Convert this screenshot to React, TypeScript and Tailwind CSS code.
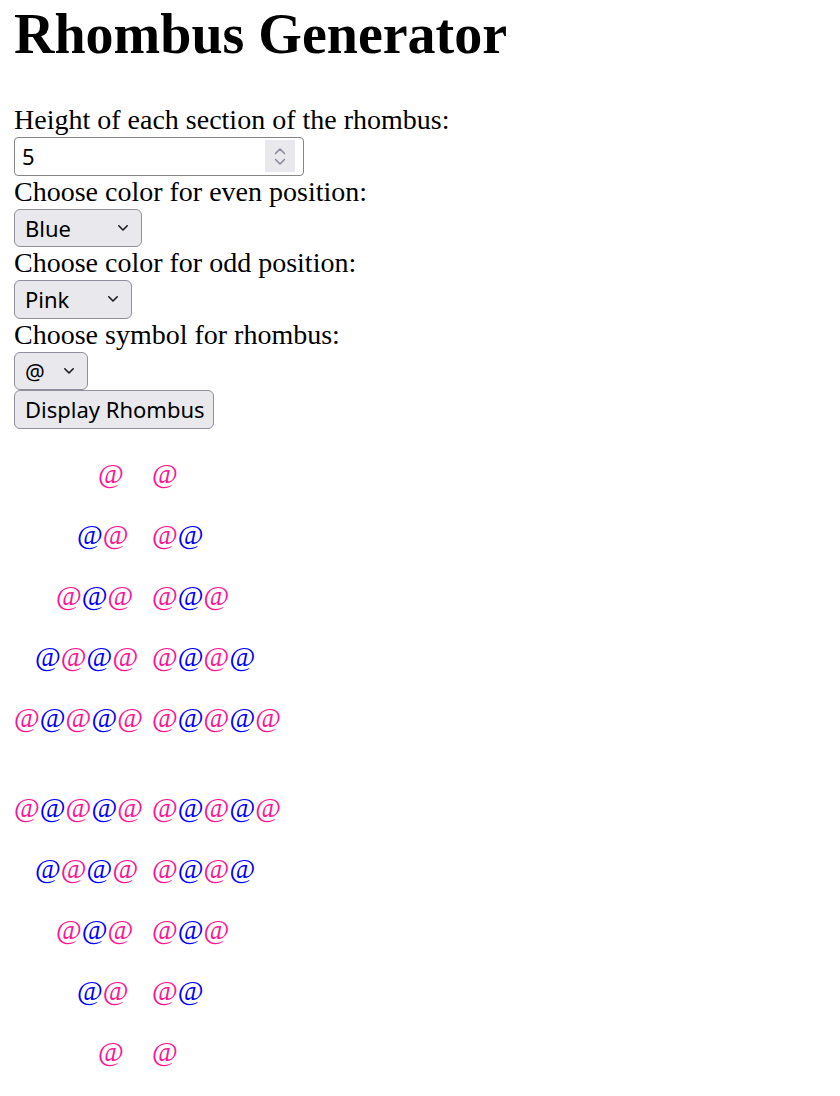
import React from "react";

const PINK = "#ff1493";
const BLUE = "#0000ff";
const SANS = '"Noto Sans", "Open Sans", sans-serif';

function Chevron() {
  return (
    <svg width="12" height="8" viewBox="0 0 12 8">
      <path d="M1.8 1.8 L6 6 L10.2 1.8" fill="none" stroke="#1a1a1a" strokeWidth="1.6" strokeLinecap="round" strokeLinejoin="round" />
    </svg>
  );
}

function FakeSelect({ label, width }: { label: string; width: string }) {
  return (
    <div
      className={`${width} h-[38.5px] flex items-center justify-between pl-[10px] pr-[12px] bg-[#e9e9ed] border border-[#8f8f9d] rounded-[6px] text-[22px] text-black leading-none`}
      style={{ fontFamily: SANS }}
    >
      <span>{label}</span>
      <Chevron />
    </div>
  );
}

function At({ color }: { color: string }) {
  return (
    <span className="inline-block w-[25.8px] text-center" style={{ color }}>
      @
    </span>
  );
}

function Row({ n, total }: { n: number; total: number }) {
  const lead = " ".repeat(3 * (total - n));
  const left: React.ReactNode[] = [];
  for (let k = n; k >= 1; k--) {
    left.push(<At key={"l" + k} color={k % 2 === 1 ? PINK : BLUE} />);
  }
  const right: React.ReactNode[] = [];
  for (let k = 1; k <= n; k++) {
    right.push(<At key={"r" + k} color={k % 2 === 1 ? PINK : BLUE} />);
  }
  return (
    <div className="h-[32px] leading-[32px] whitespace-pre flex">
      <span className="w-[138px] shrink-0">
        {lead}
        {left}
      </span>
      <span>{right}</span>
    </div>
  );
}

function Label({ children }: { children: React.ReactNode }) {
  return <div className="leading-[32px] h-[33px]">{children}</div>;
}

export default function App() {
  const total = 5;
  const top = [1, 2, 3, 4, 5];
  const bottom = [5, 4, 3, 2, 1];
  return (
    <div
      className="min-h-[1096px] bg-white text-black px-[14px] text-[28px]"
      style={{ fontFamily: '"Liberation Serif", "Times New Roman", serif' }}
    >
      <h1 className="text-[56px] font-bold leading-[64px] m-0 pt-[2px] mb-[38px]">Rhombus Generator</h1>
      <div className="flex flex-col items-start">
        <Label>Height of each section of the rhombus:</Label>
        <div className="w-[290px] h-[38.5px] border border-[#858585] rounded-[4px] flex items-center justify-between pl-[7px] pr-[8px]">
          <span className="text-[22px] leading-none" style={{ fontFamily: SANS }}>
            5
          </span>
          <div className="w-[30px] h-[32px] bg-[#e9e9ed] flex flex-col items-center justify-center gap-[3px]">
            <svg width="12" height="8" viewBox="0 0 12 8">
              <path d="M1.5 6.5 L6 2 L10.5 6.5" fill="none" stroke="#8a8a98" strokeWidth="1.6" strokeLinecap="round" strokeLinejoin="round" />
            </svg>
            <svg width="12" height="8" viewBox="0 0 12 8">
              <path d="M1.5 1.5 L6 6 L10.5 1.5" fill="none" stroke="#8a8a98" strokeWidth="1.6" strokeLinecap="round" strokeLinejoin="round" />
            </svg>
          </div>
        </div>
        <Label>Choose color for even position:</Label>
        <FakeSelect label="Blue" width="w-[128px]" />
        <Label>Choose color for odd position:</Label>
        <FakeSelect label="Pink" width="w-[118px]" />
        <Label>Choose symbol for rhombus:</Label>
        <FakeSelect label="@" width="w-[74px]" />
        <div
          className="w-[200px] h-[38.5px] flex items-center pl-[10px] bg-[#e9e9ed] border border-[#8f8f9d] rounded-[6px] text-[22px] leading-none"
          style={{ fontFamily: SANS }}
        >
          Display Rhombus
        </div>
      </div>
      <div className="flex flex-col gap-[29px] mt-[29px]">
        {top.map((n) => (
          <Row key={"t" + n} n={n} total={total} />
        ))}
        <div className="h-0" />
        {bottom.map((n) => (
          <Row key={"b" + n} n={n} total={total} />
        ))}
      </div>
    </div>
  );
}
